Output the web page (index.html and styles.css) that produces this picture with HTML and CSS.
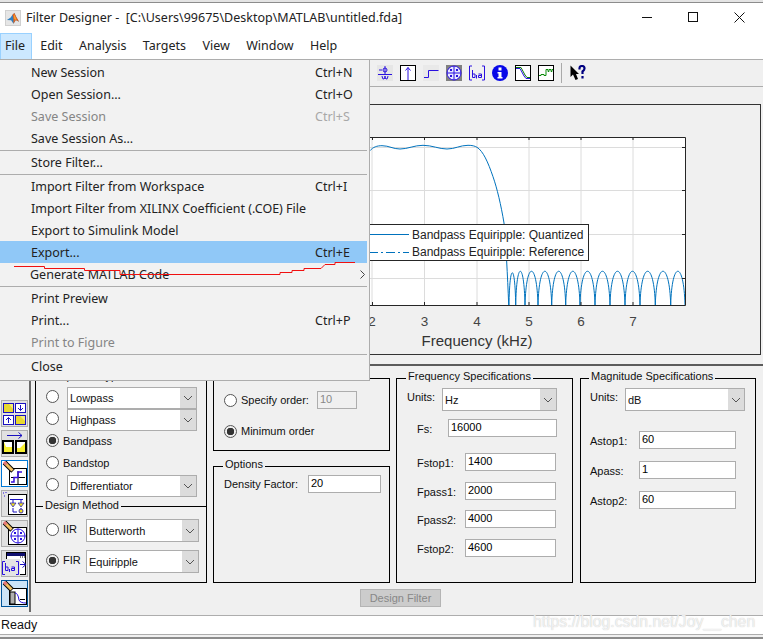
FILE: index.html
```html
<!DOCTYPE html>
<html lang="en">
<head>
    <meta charset="UTF-8">
    <meta name="viewport" content="width=device-width, initial-scale=1.0">
    <title>Filter Designer</title>
    <link rel="stylesheet" href="styles.css">
</head>
<body>
    <div class="top-strip"></div>

    <!-- Title bar -->
    <div class="titlebar">
        <span class="app-icon">
            <svg width="15" height="15" viewBox="0 0 15 15">
                <path d="M1 9 L5 6.5 L7 3.5 L9 1.5 L11 6 L14 11 L10.5 9 L8 13 L5.5 9.5 Z" fill="#2f7fc0"/>
                <path d="M7 3.5 L9 1.5 L11 6 L14 11 L10.5 9 L8 13 L8 8 Z" fill="#e8651a"/>
                <path d="M8.5 3 L10 6 L11 9 L9 8 Z" fill="#f4b03c"/>
            </svg>
        </span>
        <span class="title-text">Filter Designer -  [C:\Users\99675\Desktop\MATLAB\untitled.fda]</span>
        <div class="window-buttons">
            <svg width="46" height="30" viewBox="0 0 46 30"><path d="M17 14.5 H27" stroke="#111" fill="none"/></svg>
            <svg width="46" height="30" viewBox="0 0 46 30"><rect x="17.5" y="9.5" width="9" height="9" stroke="#111" fill="none"/></svg>
            <svg width="46" height="30" viewBox="0 0 46 30"><path d="M17.5 9.5 L27.5 19.5 M27.5 9.5 L17.5 19.5" stroke="#111" fill="none"/></svg>
        </div>
    </div>

    <!-- Menu bar -->
    <div class="menubar">
        <span class="menu-title active">File</span>
        <span class="menu-title">Edit</span>
        <span class="menu-title">Analysis</span>
        <span class="menu-title">Targets</span>
        <span class="menu-title">View</span>
        <span class="menu-title">Window</span>
        <span class="menu-title">Help</span>
    </div>

    <!-- Toolbar -->
    <div class="toolbar">
        <svg class="tool" viewBox="0 0 16 16">
            <rect width="16" height="16" fill="#e6e6e6"/>
            <path d="M2 5 H5 M8 1 V9 M1 9.5 H15 M5 11 Q5.5 15 7 14 Q8 13.5 8 11 Q8 13.5 9 14 Q10.5 15 11 11" stroke="#2a10e0" fill="none"/>
            <circle cx="8" cy="5" r="2" stroke="#2a10e0" fill="none"/>
        </svg>
        <svg class="tool" viewBox="0 0 16 16">
            <rect x="0.5" y="0.5" width="15" height="15" fill="#fff" stroke="#000"/>
            <path d="M8 15 V2.5 M5.5 5.5 L8 2.5 L10.5 5.5" stroke="#2a10e0" fill="none"/>
        </svg>
        <svg class="tool" viewBox="0 0 16 16">
            <rect width="16" height="16" fill="#e9e9e9"/>
            <path d="M1 12.5 H5.5 V5.5 H15.5" stroke="#2a10e0" fill="none"/>
        </svg>
        <svg class="tool" viewBox="0 0 16 16">
            <rect width="16" height="16" fill="#808080"/>
            <circle cx="8" cy="8" r="7" fill="#e8e8ff" stroke="#2a10e0"/>
            <path d="M1 8 H15 M8 1 V15 M4 4 L6 6 M6 4 L4 6 M10 4 L12 6 M12 4 L10 6 M4 10 L6 12 M6 10 L4 12 M10 10 L12 12 M12 10 L10 12" stroke="#2a10e0" fill="none"/>
        </svg>
        <svg class="tool" viewBox="0 0 16 16">
            <path d="M3 1 H0.5 V15 H3 M13 1 H15.5 V15 H13 M3.5 5 V12.5 H6 V9 H3.5 M7.5 10 V13.5 M9.5 9 H12.5 V12.5 H9.5 V10.5 H12.5" stroke="#2a10e0" fill="none"/>
        </svg>
        <svg class="tool" viewBox="0 0 16 16">
            <circle cx="8" cy="8" r="8" fill="#0808e8"/>
            <rect x="6.5" y="2.5" width="3" height="3" fill="#fff"/>
            <path d="M5.5 7 H9.5 V12 H10.5 V13.5 H5.5 V12 H6.5 V8.5 H5.5 Z" fill="#fff"/>
        </svg>
        <svg class="tool" viewBox="0 0 16 16">
            <rect x="0.5" y="0.5" width="15" height="15" fill="#fff" stroke="#000"/>
            <path d="M1 3.5 H5 L9 11 L11 13.5 H15" stroke="#2a10e0" fill="none"/>
            <path d="M1 2.5 H6 L10 10 L12 12.5 H15" stroke="#0a7a0a" fill="none"/>
        </svg>
        <svg class="tool" viewBox="0 0 16 16">
            <rect x="0.5" y="0.5" width="15" height="15" fill="#fff" stroke="#000"/>
            <path d="M1 10.5 H3 V9.5 H6 V10.5 H8 V4.5 H10 V6.5 H11 V4.5 H13 V6.5 H14 V4.5 H15" stroke="#0a8a0a" fill="none"/>
        </svg>
        <span class="tool-sep"></span>
        <svg class="tool help-tool" viewBox="0 0 16 16">
            <path d="M0.5 0.5 V12 L3 9.5 L5.5 15 L8 14 L6 9 H9 Z" fill="#000"/>
            <path d="M9.5 4.5 V3 Q9.5 1 12 1 Q14.5 1 14.5 3.5 Q14.5 5 12.5 6.5 V9 M12.5 11 V13.5" stroke="#000080" stroke-width="2.2" fill="none"/>
        </svg>
    </div>

    <div class="workspace">
        <!-- Left icon column -->
        <div class="sidebar">
            <div class="side-btn">
                <svg viewBox="0 0 25 25" width="25" height="25">
                    <rect x="1.5" y="2.5" width="10" height="9" fill="#f6ee7a" stroke="#1a10c0"/>
                    <rect x="13.5" y="2.5" width="10" height="9" fill="#fff" stroke="#1a10c0"/>
                    <rect x="1.5" y="14.5" width="10" height="9" fill="#fff" stroke="#1a10c0"/>
                    <rect x="13.5" y="14.5" width="10" height="9" fill="#f6ee7a" stroke="#1a10c0"/>
                    <path d="M18.5 4 V9.5 M16 7 L18.5 9.5 L21 7 M6.5 22 V16.5 M4 19 L6.5 16.5 L9 19" stroke="#1a10c0" fill="none"/>
                    <path d="M2 3 H7 L11 8 V11 H2 Z M14 15 H18 L23 20 V23 H14 Z" fill="#e8d830"/>
                </svg>
            </div>
            <div class="side-btn">
                <svg viewBox="0 0 25 25" width="25" height="25">
                    <path d="M5 4.5 H20 M16.5 1.5 L20 4.5 L16.5 7.5" stroke="#1a10c0" fill="none"/>
                    <rect x="1" y="10" width="10" height="12" fill="#f6ee30" stroke="#000" stroke-width="2"/>
                    <rect x="14" y="10" width="10" height="12" fill="#f6ee30" stroke="#000" stroke-width="2"/>
                    <path d="M2 11 H10 V16 H4 Z M15 11 H23 V12 L18 17 H15 Z" fill="#fff"/>
                </svg>
            </div>
            <div class="side-btn selected">
                <svg viewBox="0 0 25 25" width="25" height="25">
                    <rect x="7.5" y="7.5" width="17" height="16" fill="#fff" stroke="#000"/>
                    <path d="M16 10 V23 M9 16.5 H23" stroke="#000" fill="none"/>
                    <path d="M9 21 H12 V16.5 H16 V11 H20" stroke="#3a10e0" stroke-width="1.5" fill="none"/>
                    <path d="M2.5 1.5 L11 10" stroke="#000" stroke-width="5"/>
                    <path d="M3 2 L10.5 9.5" stroke="#f2c060" stroke-width="3"/>
                    <path d="M2 1 L4.5 3.5" stroke="#e87878" stroke-width="3"/>
                </svg>
            </div>
            <div class="side-btn">
                <svg viewBox="0 0 25 25" width="25" height="25">
                    <rect x="6.5" y="3.5" width="18" height="20" fill="#fff" stroke="#000"/>
                    <path d="M1 2 H2 M4 1 V2 M2 5 H3" stroke="#2a10e0" fill="none"/>
                    <path d="M8 8.5 H21 M11 8.5 V12 M19 8.5 V12 M11 17 V21 H15 M19 17 V19" stroke="#1a10c0" fill="none"/>
                    <path d="M8 12 H14 L11 16 Z M16 12 H22 L19 16 Z" fill="#f0e020" stroke="#1a10c0" stroke-width="0.7"/>
                    <circle cx="19" cy="20" r="2" fill="#f0e020" stroke="#1a10c0" stroke-width="0.8"/>
                </svg>
            </div>
            <div class="side-btn">
                <svg viewBox="0 0 25 25" width="25" height="25">
                    <rect x="6.5" y="6.5" width="18" height="17" fill="#fff" stroke="#000"/>
                    <circle cx="16" cy="15" r="7" fill="#fff" stroke="#2a10e0"/>
                    <path d="M8.5 15 H23.5 M16 7.5 V22.5 M12 11 L14 13 M14 11 L12 13 M18 11 L20 13 M20 11 L18 13 M12 17 L14 19 M14 17 L12 19 M18 17 L20 19 M20 17 L18 19" stroke="#2a10e0" fill="none"/>
                    <path d="M2.5 1.5 L10 9" stroke="#000" stroke-width="5"/>
                    <path d="M3 2 L9.5 8.5" stroke="#f2c060" stroke-width="3"/>
                    <path d="M2 1 L4.5 3.5" stroke="#e87878" stroke-width="3"/>
                </svg>
            </div>
            <div class="side-btn">
                <svg viewBox="0 0 25 25" width="25" height="25">
                    <rect x="4.5" y="1.5" width="19" height="22" fill="#fff" stroke="#000"/>
                    <rect x="5" y="2" width="18" height="3" fill="#101070"/>
                    <path d="M18 6 H23" stroke="#000" stroke-dasharray="1 1"/>
                    <rect x="0" y="8" width="18" height="17" fill="#e4e4e4"/>
                    <path d="M3 10.5 H0.5 V23.5 H3 M14 10.5 H16.5 V23.5 H14 M3.5 12 V19.5 H6 V16 H3.5 M7.5 18 V21 M9.5 16 H12.5 V19.5 H9.5 V17.5 H12.5" stroke="#2a10e0" fill="none"/>
                    <path d="M18 13.5 H23 M20.5 10.5 L24 13.5 L20.5 16.5" stroke="#1a10c0" fill="none"/>
                </svg>
            </div>
            <div class="side-btn current">
                <svg viewBox="0 0 25 25" width="25" height="25">
                    <rect x="7.5" y="7.5" width="17" height="16" fill="#fff" stroke="#000"/>
                    <rect x="8" y="11" width="5" height="12" fill="#b0b0b0" stroke="#000"/>
                    <path d="M13 12 Q16 12 17 19 Q18 22 24 22" stroke="#2a10e0" fill="none"/>
                    <path d="M18 18.5 H23" stroke="#000" fill="none"/>
                    <path d="M2.5 1.5 L10 9" stroke="#000" stroke-width="5"/>
                    <path d="M3 2 L9.5 8.5" stroke="#f2c060" stroke-width="3"/>
                    <path d="M2 1 L4.5 3.5" stroke="#e87878" stroke-width="3"/>
                </svg>
            </div>
        </div>

        <div class="main">
            <!-- Response plot -->
            <div class="figure">
                <svg class="plot" width="724" height="249" viewBox="36 105 724 249">
                    <rect x="268" y="137" width="417" height="168" fill="#fff"/>
                    <g class="grid">
                        <path d="M320 137 V305 M372 137 V305 M424.5 137 V305 M477 137 V305 M529 137 V305 M581 137 V305 M633 137 V305"/>
                        <path d="M268 147.5 H685 M268 190.5 H685 M268 234.5 H685 M268 278.5 H685"/>
                    </g>
                    <path class="trace" d="M370 150.7 C373 147 377 145.7 382 145.7 C389 145.7 393 149 400 149 C408 149 414 145.3 423 145.3 C432 145.3 439 149 447 149 C455 149 460 145.3 468 145.3 C472 145.3 475 146 477 147.3 C483 151 488 162 493 176.7 C497 188 501 205 504 223 C506 245 507.5 275 508.7 305"/>
                    <path class="trace" d="M509 305 C509.6 262 515 262 515.7 305 C516.6 260 524 260 525 305 C526.2 260 536.8 260 538 305 C539.2 260 550.5 260 551.7 305 C552.9 260 564.5 260 565.7 305 C566.9 260 578.8 260 580 305 C581.2 260 593.8 260 595 305 C596.2 260 608.8 260 610 305 C611.2 260 623.8 260 625 305 C626.2 260 638.8 260 640 305 C641.2 260 654.1 260 655.3 305 C656.5 260 669.5 260 670.7 305 C671.9 260 683.8 260 685 305"/>
                    <path class="axis" d="M268 137.5 H685.5 V305.5 H268 M372.5 305 V302 M424.5 305 V302 M477 305 V302 M529 305 V302 M581 305 V302 M633 305 V302 M372.5 137 V140 M424.5 137 V140 M477 137 V140 M529 137 V140 M581 137 V140 M633 137 V140 M685 147.5 H682 M685 190.5 H682 M685 234.5 H682 M685 278.5 H682"/>
                    <g class="tick-labels">
                        <text x="372" y="326">2</text>
                        <text x="424.5" y="326">3</text>
                        <text x="477" y="326">4</text>
                        <text x="529" y="326">5</text>
                        <text x="581" y="326">6</text>
                        <text x="633" y="326">7</text>
                    </g>
                    <text class="x-label" x="477" y="346">Frequency (kHz)</text>
                    <rect class="legend-box" x="330.5" y="224.5" width="258" height="36"/>
                    <path class="legend-line" d="M335 234.5 H409"/>
                    <path class="legend-line" stroke-dasharray="9 3 2 3" d="M335 252.5 H409"/>
                    <text class="legend-text" x="412" y="239">Bandpass Equiripple: Quantized</text>
                    <text class="legend-text" x="412" y="256">Bandpass Equiripple: Reference</text>
                </svg>
            </div>

            <div class="divider"></div>

            <!-- Design panels -->
            <div class="panels">
                <div class="panel response-panel">
                    <div class="section response-type">
                        <span class="panel-title">Response Type</span>
                        <div class="choice"><span class="radio"></span><div class="dropdown">Lowpass<span class="arrow"><svg width="10" height="6" viewBox="0 0 10 6"><path d="M1 1 L5 5 L9 1" stroke="#555" fill="none"/></svg></span></div></div>
                        <div class="choice"><span class="radio"></span><div class="dropdown">Highpass<span class="arrow"><svg width="10" height="6" viewBox="0 0 10 6"><path d="M1 1 L5 5 L9 1" stroke="#555" fill="none"/></svg></span></div></div>
                        <div class="choice"><span class="radio checked"></span><span class="label">Bandpass</span></div>
                        <div class="choice"><span class="radio"></span><span class="label">Bandstop</span></div>
                        <div class="choice"><span class="radio"></span><div class="dropdown">Differentiator<span class="arrow"><svg width="10" height="6" viewBox="0 0 10 6"><path d="M1 1 L5 5 L9 1" stroke="#555" fill="none"/></svg></span></div></div>
                    </div>
                    <div class="section design-method">
                        <span class="panel-title">Design Method</span>
                        <div class="choice method"><span class="radio"></span><span class="label">IIR</span><div class="dropdown tall">Butterworth<span class="arrow"><svg width="10" height="6" viewBox="0 0 10 6"><path d="M1 1 L5 5 L9 1" stroke="#555" fill="none"/></svg></span></div></div>
                        <div class="choice method"><span class="radio checked"></span><span class="label">FIR</span><div class="dropdown tall">Equiripple<span class="arrow"><svg width="10" height="6" viewBox="0 0 10 6"><path d="M1 1 L5 5 L9 1" stroke="#555" fill="none"/></svg></span></div></div>
                    </div>
                </div>

                <div class="order-column">
                    <div class="panel filter-order">
                        <span class="panel-title">Filter Order</span>
                        <div class="choice"><span class="radio"></span><span class="label">Specify order:</span><div class="edit disabled">10</div></div>
                        <div class="choice"><span class="radio checked"></span><span class="label">Minimum order</span></div>
                    </div>
                    <div class="panel options">
                        <span class="panel-title">Options</span>
                        <div class="field"><span class="density-label">Density Factor:</span><div class="edit density-edit">20</div></div>
                    </div>
                </div>

                <div class="panel freq-panel">
                    <span class="panel-title">Frequency Specifications</span>
                    <div class="field units"><span class="units-label">Units:</span><div class="dropdown tall">Hz<span class="arrow"><svg width="10" height="6" viewBox="0 0 10 6"><path d="M1 1 L5 5 L9 1" stroke="#555" fill="none"/></svg></span></div></div>
                    <div class="field fs-row"><span class="fs-label">Fs:</span><div class="edit">16000</div></div>
                    <div class="freq-list">
                        <div class="field"><span class="f-label">Fstop1:</span><div class="edit">1400</div></div>
                        <div class="field"><span class="f-label">Fpass1:</span><div class="edit">2000</div></div>
                        <div class="field"><span class="f-label">Fpass2:</span><div class="edit">4000</div></div>
                        <div class="field"><span class="f-label">Fstop2:</span><div class="edit">4600</div></div>
                    </div>
                </div>

                <div class="panel mag-panel">
                    <span class="panel-title">Magnitude Specifications</span>
                    <div class="field units"><span class="units-label">Units:</span><div class="dropdown tall">dB<span class="arrow"><svg width="10" height="6" viewBox="0 0 10 6"><path d="M1 1 L5 5 L9 1" stroke="#555" fill="none"/></svg></span></div></div>
                    <div class="mag-list">
                        <div class="field"><span class="a-label">Astop1:</span><div class="edit">60</div></div>
                        <div class="field"><span class="a-label">Apass:</span><div class="edit">1</div></div>
                        <div class="field"><span class="a-label">Astop2:</span><div class="edit">60</div></div>
                    </div>
                </div>
            </div>

            <div class="actions">
                <button class="design-btn" disabled>Design Filter</button>
            </div>
        </div>
    </div>

    <div class="statusbar">Ready</div>
    <div class="bottom-strip"></div>

    <!-- Open File menu -->
    <div class="file-menu">
        <div class="item"><span>New Session</span><span class="shortcut">Ctrl+N</span></div>
        <div class="item"><span>Open Session...</span><span class="shortcut">Ctrl+O</span></div>
        <div class="item off"><span>Save Session</span><span class="shortcut">Ctrl+S</span></div>
        <div class="item"><span>Save Session As...</span></div>
        <div class="menu-sep"></div>
        <div class="item"><span>Store Filter...</span></div>
        <div class="menu-sep"></div>
        <div class="item"><span>Import Filter from Workspace</span><span class="shortcut">Ctrl+I</span></div>
        <div class="item"><span>Import Filter from XILINX Coefficient (.COE) File</span></div>
        <div class="item"><span>Export to Simulink Model</span></div>
        <div class="item hover"><span>Export...</span><span class="shortcut">Ctrl+E</span></div>
        <div class="item generate"><span>Generate MATLAB Code</span><svg class="submenu" width="5" height="9" viewBox="0 0 5 9"><path d="M0.5 0.5 L4.5 4.5 L0.5 8.5" stroke="#444" fill="none"/></svg></div>
        <div class="menu-sep"></div>
        <div class="item"><span>Print Preview</span></div>
        <div class="item"><span>Print...</span><span class="shortcut">Ctrl+P</span></div>
        <div class="item off"><span>Print to Figure</span></div>
        <div class="menu-sep"></div>
        <div class="item"><span>Close</span></div>
    </div>

    <!-- Red pen mark drawn over the menu -->
    <svg class="pen-mark" width="763" height="639" viewBox="0 0 763 639">
        <path d="M14 266.5 H44.5 V268.5 H84.5 V270.5 H120 V274.5 H280 V272.5 H292 V270.5 H304 V268.5 H321 L325 264.5 H335 V262.5 H355" stroke="#f01010" fill="none"/>
    </svg>

    <div class="watermark">https://blog.csdn.net/Joy__chen</div>
</body>
</html>
```

FILE: styles.css
```css
* {
    margin: 0;
    padding: 0;
    box-sizing: border-box;
}

:root {
    --panel-bg: #f0f0f0;
    --line-grey: #adadad;
    --ui-font: 'Liberation Sans', Arial, sans-serif;
    --menu-font: 'Noto Sans', 'Open Sans', sans-serif;
}

body {
    width: 763px;
    height: 639px;
    overflow: hidden;
    position: relative;
    background: var(--panel-bg);
    font-family: var(--ui-font);
    font-size: 11px;
    color: #111;
}

/* Window chrome */
.top-strip {
    height: 3px;
    background: #e4e4e4;
    border-bottom: 1px solid #8c8c8c;
}

.titlebar {
    height: 30px;
    background: #fff;
    display: flex;
    align-items: center;
    padding-left: 5px;
}

.app-icon {
    width: 16px;
    height: 16px;
    display: flex;
    background: #e6e6e6;
    border: 1px solid #d0d0d0;
    margin-right: 5px;
}

.title-text {
    font-family: var(--menu-font);
    font-size: 12.5px;
    white-space: pre;
    color: #222;
    margin-top: -2px;
}

.window-buttons {
    margin-left: auto;
    display: flex;
    margin-top: -1px;
}

.menubar {
    height: 27px;
    background: #fff;
    display: flex;
    border-bottom: 1px solid var(--line-grey);
    font-family: var(--menu-font);
    font-size: 12.5px;
}

.menu-title {
    padding: 0 8.2px 2px;
    display: flex;
    align-items: center;
    color: #222;
}

.menu-title.active {
    width: 32px;
    padding: 0 0 2px 4px;
    background: #cce8ff;
    border: 1px solid #99d1ff;
    border-bottom: none;
}

.toolbar {
    height: 27px;
    display: flex;
    align-items: center;
    gap: 7px;
    padding-left: 377px;
    border-bottom: 1px solid var(--line-grey);
}

.tool {
    width: 16px;
    height: 16px;
}

.tool-sep {
    width: 1px;
    height: 20px;
    background: #aaa;
}

.help-tool {
    margin-left: 1px;
}

/* Body of the window */
.workspace {
    display: flex;
    align-items: flex-start;
    height: 528px;
}

.sidebar {
    width: 31px;
    height: 525px;
    flex-shrink: 0;
    border-right: 2px solid #6a6a6a;
    padding: 313px 0 0 1px;
    display: flex;
    flex-direction: column;
    gap: 3px;
}

.side-btn {
    width: 27px;
    height: 27px;
    background: #e1e1e1;
    border: 1px solid var(--line-grey);
    display: flex;
}

.side-btn.selected {
    background: #fff;
    border-color: #0078d7;
}

.side-btn.current {
    background: #cce4f7;
    border-color: #005499;
}

.main {
    flex: 1;
    display: flex;
    flex-direction: column;
}

.figure {
    margin: 17px 2px 0 4px;
    height: 251px;
    border: 1px solid #333;
}

.plot {
    display: block;
}

.grid path {
    stroke: #dcdcdc;
    fill: none;
}

.trace {
    stroke: #0072bd;
    fill: none;
    stroke-width: 1;
}

.axis {
    stroke: #262626;
    fill: none;
}

.tick-labels text {
    font-family: var(--ui-font);
    font-size: 13.5px;
    fill: #444;
    text-anchor: middle;
}

.x-label {
    font-family: var(--ui-font);
    font-size: 15px;
    fill: #333;
    text-anchor: middle;
}

.legend-box {
    fill: #fff;
    stroke: #262626;
}

.legend-line {
    stroke: #0072bd;
    fill: none;
}

.legend-text {
    font-family: var(--ui-font);
    font-size: 12px;
    fill: #222;
}

.divider {
    height: 2px;
    background: #5c5c5c;
    margin-top: 9px;
}

/* Design panels */
.panels {
    display: grid;
    grid-template-columns: 172px 177px 178px 176px;
    column-gap: 6px;
    margin: 12px 0 0 4px;
    height: 205px;
}

.panel {
    position: relative;
    border: 1px solid #000;
}

.panel-title {
    position: absolute;
    top: -10px;
    left: 9px;
    padding: 0 2px;
    background: var(--panel-bg);
    line-height: 14px;
    white-space: nowrap;
}

.section {
    position: relative;
}

.design-method .panel-title {
    top: -9px;
    left: 7px;
}

.choice {
    display: flex;
    align-items: center;
    height: 22px;
    padding-left: 10px;
}

.radio {
    width: 13px;
    height: 13px;
    flex-shrink: 0;
    border-radius: 50%;
    border: 1px solid #555;
    background: #fff;
}

.radio.checked {
    background: radial-gradient(circle, #333 3.5px, #eee 4px);
}

.label {
    margin-left: 4px;
    white-space: nowrap;
}

/* Radios and their captions sit a little above the dropdown centre */
.response-panel .radio,
.response-panel .label {
    margin-top: -3px;
}

.dropdown {
    flex: 1;
    height: 22px;
    display: flex;
    align-items: center;
    justify-content: space-between;
    background: #fff;
    padding-left: 2px;
    border: 1px solid var(--line-grey);
}

.dropdown.tall {
    height: 23px;
}

.arrow {
    width: 16px;
    align-self: stretch;
    display: flex;
    align-items: center;
    justify-content: center;
    background: #dcdcdc;
}

.response-type {
    height: 128px;
    padding-top: 8px;
    border-bottom: 1px solid #000;
}

.response-type .dropdown {
    margin-left: 8px;
    margin-right: 9px;
}

.design-method {
    padding-top: 12px;
    display: flex;
    flex-direction: column;
    gap: 8px;
}

.choice.method {
    height: 23px;
    padding-right: 7px;
}

.method .label {
    width: 23px;
}

.edit {
    height: 18px;
    line-height: 15px;
    background: #fff;
    padding-left: 2px;
    border: 1px solid var(--line-grey);
    color: #000;
}

.edit.disabled {
    width: 40px;
    background: var(--panel-bg);
    color: #888;
}

.order-column {
    display: flex;
    flex-direction: column;
    gap: 15px;
}

.filter-order {
    height: 73px;
    padding-top: 12px;
}

.filter-order .choice {
    height: 18px;
    margin-bottom: 13px;
}

.filter-order .label {
    width: 76px;
}

.options {
    flex: 1;
    padding: 8px 0 0 10px;
}

.field {
    display: flex;
    align-items: center;
}

.density-label {
    width: 84px;
}

.density-edit {
    width: 73px;
}

.freq-panel {
    margin-right: 1px;
    padding: 9px 0 0 10px;
}

.mag-panel {
    padding: 9px 0 0 9px;
}

.mag-panel .panel-title {
    left: 8px;
}

.units-label {
    width: 35px;
    margin-top: -5px;
}

.units .dropdown {
    flex: none;
    width: 115px;
}

.mag-panel .units .dropdown {
    width: 120px;
}

.fs-row {
    margin: 8px 0 0 10px;
}

.fs-label {
    width: 31px;
    margin-top: 2px;
}

.fs-row .edit {
    width: 109px;
}

.freq-list {
    margin: 16px 0 0 10px;
    display: flex;
    flex-direction: column;
    gap: 10.7px;
}

.f-label {
    width: 48px;
    margin-top: 2px;
}

.freq-list .edit {
    width: 91px;
}

.mag-list {
    margin-top: 20px;
    display: flex;
    flex-direction: column;
    gap: 12px;
}

.a-label {
    width: 49px;
    margin-top: 2px;
}

.mag-list .edit {
    width: 97px;
}

.actions {
    padding: 6px 0 0 329px;
}

.design-btn {
    width: 81px;
    height: 18px;
    background: #cccccc;
    border: 1px solid #b4b4b4;
    color: #888;
    font-family: var(--ui-font);
    font-size: 11px;
}

.statusbar {
    height: 20px;
    background: #fff;
    border-top: 1px solid var(--line-grey);
    border-bottom: 1px solid var(--line-grey);
    font-size: 12.5px;
    line-height: 18px;
    padding-left: 1px;
}

.bottom-strip {
    height: 4px;
    border-bottom: 2px solid #8c8c8c;
}

/* File menu */
.file-menu {
    position: absolute;
    top: 60px;
    left: 0;
    width: 370px;
    height: 321px;
    padding: 1px 2px 0 0;
    background: #f2f2f2;
    border-right: 1px solid var(--line-grey);
    border-bottom: 1px solid var(--line-grey);
    font-family: var(--menu-font);
    font-size: 12.5px;
    color: #222;
}

.item {
    height: 22px;
    display: flex;
    align-items: center;
    padding-left: 31px;
    position: relative;
}

.item.generate {
    padding-left: 30px;
}

.item.off {
    color: #858585;
}

.item.off .shortcut {
    color: #a8a8a8;
}

.item.hover {
    background: #90c8f7;
}

.shortcut {
    position: absolute;
    left: 315px;
}

.submenu {
    position: absolute;
    left: 360px;
    top: 7px;
}

.menu-sep {
    height: 2px;
    border-bottom: 1px solid var(--line-grey);
}

.pen-mark {
    position: absolute;
    top: 0;
    left: 0;
}

.watermark {
    position: absolute;
    left: 533px;
    top: 613px;
    font-size: 15.8px;
    color: rgba(255, 255, 255, 0.75);
    text-shadow: 0 0 1px #bdbdbd;
    white-space: nowrap;
}
```
